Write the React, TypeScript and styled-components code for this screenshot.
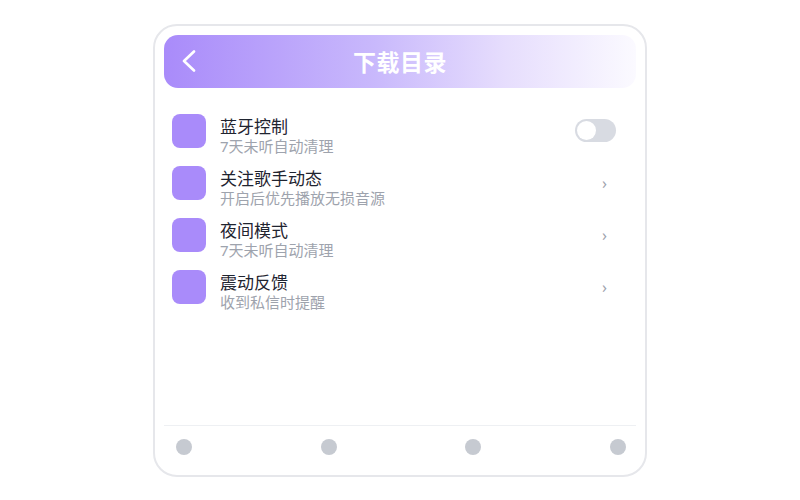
import React from "react";
import styled, { createGlobalStyle } from "styled-components";

interface Setting {
    title: string;
    desc: string;
    kind: "toggle" | "link";
}

const settings: Setting[] = [
    { title: "蓝牙控制", desc: "7天未听自动清理", kind: "toggle" },
    { title: "关注歌手动态", desc: "开启后优先播放无损音源", kind: "link" },
    { title: "夜间模式", desc: "7天未听自动清理", kind: "link" },
    { title: "震动反馈", desc: "收到私信时提醒", kind: "link" },
];

const App = () => {
    const [on, setOn] = React.useState(false);

    return (
        <>
            <GlobalStyle />
            <Page>
                <Frame>
                    <Header>
                        <BackButton aria-label="返回">
                            <svg width="14" height="22" viewBox="0 0 14 22" fill="none">
                                <polyline points="12,1.5 2,11 12,20.5" stroke="#fff" strokeWidth="2.6" strokeLinecap="round" strokeLinejoin="round" />
                            </svg>
                        </BackButton>
                        <Title>下载目录</Title>
                        <span />
                    </Header>

                    <List>
                        {settings.map((item, idx) => (
                            <Row key={idx}>
                                <Icon />
                                <Texts>
                                    <RowTitle>{item.title}</RowTitle>
                                    <RowDesc>{item.desc}</RowDesc>
                                </Texts>
                                <Spacer />
                                {item.kind === "toggle" ? (
                                    <Switch $on={on} onClick={() => setOn(!on)}>
                                        <Knob $on={on} />
                                    </Switch>
                                ) : (
                                    <Chevron>›</Chevron>
                                )}
                            </Row>
                        ))}
                    </List>

                    <Nav>
                        <Dot />
                        <Dot />
                        <Dot />
                        <Dot />
                    </Nav>
                </Frame>
            </Page>
        </>
    );
};

const GlobalStyle = createGlobalStyle`
    * {
        box-sizing: border-box;
    }

    body {
        margin: 0;
        background: #fff;
        font-family: "Noto Sans", "Noto Sans CJK SC", sans-serif;
    }
`;

const Page = styled.div`
    width: 800px;
    height: 500px;
    display: flex;
    align-items: center;
    justify-content: center;
`;

const Frame = styled.div`
    width: 494px;
    height: 453px;
    border: 2px solid #e6e7eb;
    border-radius: 24px;
    padding: 9px 9px 9px 9px;
    display: flex;
    flex-direction: column;
    background: #fff;
`;

const Header = styled.div`
    height: 53px;
    border-radius: 14px;
    background: linear-gradient(90deg, #a98bfa 0%, #c9b9fc 45%, #e6ddfd 72%, #fbfaff 100%);
    display: grid;
    grid-template-columns: 1fr auto 1fr;
    align-items: center;
    padding: 0 18px;
`;

const BackButton = styled.button`
    border: 0;
    background: none;
    padding: 0;
    width: 14px;
    height: 22px;
    cursor: pointer;
    display: flex;
`;

const Title = styled.h1`
    margin: 0;
    font-size: 23px;
    font-weight: 700;
    color: #fff;
    letter-spacing: 0.5px;
    font-family: "Noto Sans CJK SC", sans-serif;
`;

const List = styled.div`
    flex: 1;
    display: flex;
    flex-direction: column;
    padding-top: 17px;
`;

const Row = styled.div`
    height: 52px;
    display: flex;
    align-items: center;
    padding: 0 20px 0 8px;
`;

const Icon = styled.div`
    width: 34px;
    height: 34px;
    border-radius: 8px;
    background: #a98bfa;
    flex-shrink: 0;
`;

const Texts = styled.div`
    display: flex;
    flex-direction: column;
    margin-left: 14px;
    padding-top: 10px;
`;

const RowTitle = styled.span`
    font-size: 17px;
    line-height: 20px;
    color: #1f2430;
`;

const RowDesc = styled.span`
    font-size: 15px;
    line-height: 18px;
    color: #9ea3ad;
`;

const Spacer = styled.div`
    flex-grow: 1;
`;

const Switch = styled.button<{ $on: boolean }>`
    width: 41px;
    height: 23px;
    border: 0;
    padding: 2px;
    border-radius: 12px;
    background: ${p => (p.$on ? "#a98bfa" : "#d8dbe2")};
    display: flex;
    justify-content: ${p => (p.$on ? "flex-end" : "flex-start")};
    cursor: pointer;
`;

const Knob = styled.span<{ $on: boolean }>`
    width: 19px;
    height: 19px;
    border-radius: 50%;
    background: #fff;
`;

const Chevron = styled.span`
    font-size: 16px;
    color: #9ea3ad;
    margin-right: 9px;
    line-height: 1;
`;

const Nav = styled.div`
    border-top: 1px solid #eef0f3;
    display: flex;
    justify-content: space-between;
    padding: 13px 10px 11px 12px;
`;

const Dot = styled.div`
    width: 16px;
    height: 16px;
    border-radius: 50%;
    background: #c6cad1;
`;

export default App;
